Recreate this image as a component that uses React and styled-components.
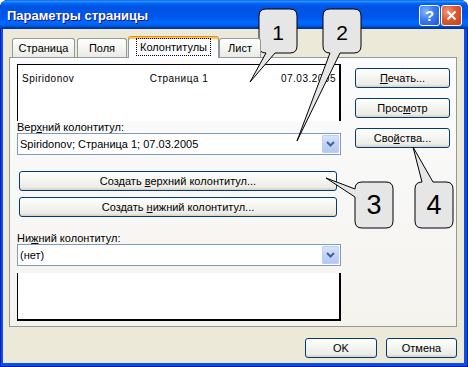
import React from 'react'
import styled, { createGlobalStyle } from 'styled-components'

const GlobalStyle = createGlobalStyle`
  html, body {
    margin: 0;
    padding: 0;
    background: #fff;
  }
  body {
    font-family: "Liberation Sans", Arial, sans-serif;
    font-size: 11px;
    color: #000;
  }
`

const Window = styled.div`
  position: relative;
  width: 468px;
  height: 367px;
  display: flex;
  flex-direction: column;
  background: #0a4fe4;
  box-shadow: inset 1px 0 #0019cf, inset -1px 0 #001ea0, inset 0 -1px #001ea0;
  border-radius: 8px 8px 0 0;
  overflow: hidden;
`

const TitleBar = styled.div`
  height: 29px;
  flex: none;
  display: flex;
  align-items: center;
  padding: 2px 6px 0 7px;
  box-sizing: border-box;
  background: linear-gradient(
    to bottom,
    #0058ee 0%,
    #3593ff 4%,
    #288eff 6%,
    #127dff 8%,
    #036ffc 10%,
    #0262ee 14%,
    #0057e5 20%,
    #0054e3 24%,
    #0055eb 56%,
    #005bf5 66%,
    #026afe 76%,
    #0062ef 86%,
    #0052d6 92%,
    #0040ab 94%,
    #003092 100%
  );
`

const Title = styled.div`
  flex: 1;
  color: #fff;
  font-weight: bold;
  font-size: 13px;
  text-shadow: 1px 1px #0f1089;
`

const CaptionButton = styled.div`
  width: 21px;
  height: 21px;
  box-sizing: border-box;
  margin-left: 1px;
  border: 1px solid #fff;
  border-radius: 3px;
  display: flex;
  align-items: center;
  justify-content: center;
  color: #fff;
  font-weight: bold;
  font-size: 15px;
  background: ${p =>
    p.$close
      ? 'radial-gradient(circle at 30% 30%, #f09a80 0%, #e0562e 45%, #c4401f 100%)'
      : 'radial-gradient(circle at 30% 30%, #8ab4fb 0%, #3a7cf2 45%, #1e55d8 100%)'};
`

const Client = styled.div`
  flex: 1;
  margin: 0 4px 4px 3px;
  padding: 7px 7px 0 6px;
  background: #ece9d8;
  display: flex;
  flex-direction: column;
`

const TabStrip = styled.div`
  display: flex;
  align-items: flex-end;
  height: 22px;
  margin-bottom: -1px;
  padding-left: 3px;
  position: relative;
  z-index: 1;
`

const Tab = styled.div`
  box-sizing: border-box;
  width: ${p => p.$w}px;
  margin-right: ${p => p.$mr || 0}px;
  height: ${p => (p.$active ? 22 : 19)}px;
  margin-bottom: ${p => (p.$active ? 0 : 1)}px;
  border: 1px solid #919b9c;
  border-bottom: none;
  border-radius: 3px 3px 0 0;
  display: flex;
  align-items: center;
  justify-content: center;
  padding-bottom: ${p => (p.$active ? 2 : 0)}px;
  background: ${p =>
    p.$active ? '#fcfcfe' : 'linear-gradient(#ffffff, #f3f3ef 60%, #ecebe6)'};
  ${p =>
    p.$active &&
    `
    border-top: 1px solid #e68b2c;
    box-shadow: inset 0 2px #ffc73c;
  `}
`

const FocusText = styled.span`
  outline: 1px dotted #000;
  outline-offset: 1px;
  padding: 1px 2px;
`

const Panel = styled.div`
  box-sizing: border-box;
  height: 270px;
  border: 1px solid #919b9c;
  background: linear-gradient(#fcfcfe, #f4f3ee);
  padding: 6px 0 5px 7px;
  display: flex;
`

const LeftCol = styled.div`
  width: 324px;
  display: flex;
  flex-direction: column;
`

const RightCol = styled.div`
  width: 95px;
  margin-left: 14px;
  padding-top: 4px;
  display: flex;
  flex-direction: column;
  gap: 10px;
`

const PagePreview = styled.div`
  box-sizing: border-box;
  height: ${p => p.$h}px;
  margin-top: ${p => p.$mt || 0}px;
  background: #fff;
  border-left: 1px solid #000;
  border-right: 2px solid #000;
  border-top: ${p => (p.$top ? '1px solid #000' : 'none')};
  border-bottom: ${p => (p.$top ? 'none' : '2px solid #000')};
`

const PreviewRow = styled.div`
  display: grid;
  grid-template-columns: 1fr auto 1fr;
  padding: 8px 3px 0 4px;
  font-size: 10px;
  line-height: 12px;
  letter-spacing: 0.5px;
`

const PreviewCell = styled.span`
  text-align: ${p => p.$align};
`

const Label = styled.div`
  line-height: 12px;
  height: 12px;
  margin-top: ${p => p.$mt || 0}px;
`

const Combo = styled.div`
  box-sizing: border-box;
  height: 22px;
  border: 1px solid #7f9db9;
  background: #fff;
  display: flex;
  align-items: center;
  padding: 1px 1px 1px 2px;
`

const ComboText = styled.span`
  flex: 1;
`

const ComboButton = styled.div`
  width: 17px;
  height: 18px;
  box-sizing: border-box;
  border: 1px solid #bad0fa;
  border-radius: 1px;
  background: linear-gradient(#d8e4fd, #c1d3fb 50%, #b4c8f5);
  display: flex;
  align-items: center;
  justify-content: center;
`

const Button = styled.div`
  box-sizing: border-box;
  height: 20px;
  margin: ${p => p.$m || 0};
  width: ${p => (p.$w ? `${p.$w}px` : 'auto')};
  border: 1px solid #003c74;
  border-radius: 3px;
  background: linear-gradient(#ffffff 0%, #f6f6f2 40%, #ecebe6 85%, #d6d0c5 100%);
  display: flex;
  align-items: center;
  justify-content: center;
  white-space: nowrap;
`

const BottomBar = styled.div`
  display: flex;
  justify-content: flex-end;
  gap: 9px;
  margin-top: 11px;
`

const Overlay = styled.svg`
  position: absolute;
  left: 0;
  top: 0;
  pointer-events: none;
`

const callouts = [
  {
    d: 'M266 9 H290 Q297 9 297 16 V46 Q297 53 290 53 H275 L250 82 L266 53 Q259 53 259 46 V16 Q259 9 266 9 Z',
    x: 278, y: 40, size: 21, n: '1'
  },
  {
    d: 'M330 9 H354 Q361 9 361 16 V46 Q361 53 354 53 H340 L297 141 L330 53 Q323 53 323 46 V16 Q323 9 330 9 Z',
    x: 342, y: 40, size: 21, n: '2'
  },
  {
    d: 'M362 182 H386 Q393 182 393 189 V221 Q393 228 386 228 H362 Q355 228 355 221 V197 L326 178 L355 189 Q355 182 362 182 Z',
    x: 374, y: 214, size: 27, n: '3'
  },
  {
    d: 'M422 182 L413 147 L433 182 H446 Q453 182 453 189 V221 Q453 228 446 228 H422 Q415 228 415 221 V189 Q415 182 422 182 Z',
    x: 434, y: 214, size: 27, n: '4'
  }
]

const Arrow = () => (
  <svg width="9" height="6" viewBox="0 0 9 6">
    <polyline points="1,1 4.5,4.5 8,1" fill="none" stroke="#4d6185" strokeWidth="2" />
  </svg>
)

const CloseGlyph = () => (
  <svg width="11" height="11" viewBox="0 0 11 11">
    <path d="M1.5 1.5 L9.5 9.5 M9.5 1.5 L1.5 9.5" stroke="#fff" strokeWidth="2" />
  </svg>
)

export default function App() {
  return (
    <>
      <GlobalStyle />
      <Window>
        <TitleBar>
          <Title>Параметры страницы</Title>
          <CaptionButton>?</CaptionButton>
          <CaptionButton $close>
            <CloseGlyph />
          </CaptionButton>
        </TitleBar>
        <Client>
          <TabStrip>
            <Tab $w={63} $mr={2}>Страница</Tab>
            <Tab $w={50} $mr={1}>Поля</Tab>
            <Tab $w={91} $active>
              <FocusText>Колонтитулы</FocusText>
            </Tab>
            <Tab $w={42}>Лист</Tab>
          </TabStrip>
          <Panel>
            <LeftCol>
              <PagePreview $h={57} $top>
                <PreviewRow>
                  <PreviewCell $align="left">Spiridonov</PreviewCell>
                  <PreviewCell $align="center">Страница 1</PreviewCell>
                  <PreviewCell $align="right">07.03.2005</PreviewCell>
                </PreviewRow>
              </PagePreview>
              <Label>Вер<u>х</u>ний колонтитул:</Label>
              <Combo>
                <ComboText>Spiridonov; Страница 1; 07.03.2005</ComboText>
                <ComboButton><Arrow /></ComboButton>
              </Combo>
              <Button $m="16px 4px 0 2px">
                <span>Создать <u>в</u>ерхний колонтитул...</span>
              </Button>
              <Button $m="6px 4px 0 2px">
                <span>Создать <u>н</u>ижний колонтитул...</span>
              </Button>
              <Label $mt={15}>Ни<u>ж</u>ний колонтитул:</Label>
              <Combo>
                <ComboText>(нет)</ComboText>
                <ComboButton><Arrow /></ComboButton>
              </Combo>
              <PagePreview $h={48} $mt={7} />
            </LeftCol>
            <RightCol>
              <Button><span><u>П</u>ечать...</span></Button>
              <Button><span>Прос<u>м</u>отр</span></Button>
              <Button><span>Сво<u>й</u>ства...</span></Button>
            </RightCol>
          </Panel>
          <BottomBar>
            <Button $w={72}>OK</Button>
            <Button $w={71}>Отмена</Button>
          </BottomBar>
        </Client>
        <Overlay width="468" height="367" viewBox="0 0 468 367">
          {callouts.map(c => (
            <g key={c.n}>
              <path d={c.d} fill="#e6e6e6" stroke="#000" strokeWidth="1" />
              <text
                x={c.x}
                y={c.y}
                fontSize={c.size}
                textAnchor="middle"
                fontFamily='"Liberation Sans", Arial, sans-serif'
                fill="#000"
              >
                {c.n}
              </text>
            </g>
          ))}
        </Overlay>
      </Window>
    </>
  )
}
